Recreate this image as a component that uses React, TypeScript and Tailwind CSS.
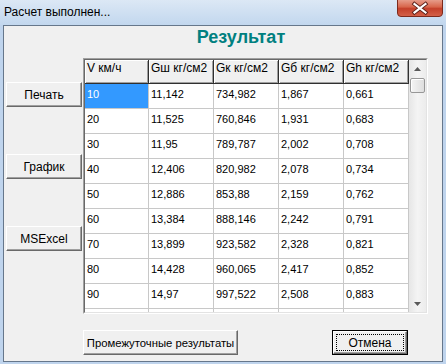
import type { ReactNode } from 'react';

const headers = ['V км/ч', 'Gш кг/см2', 'Gк кг/см2', 'Gб кг/см2', 'Gh кг/см2'];
const colW = ['w-[64px]', 'w-[65px]', 'w-[65px]', 'w-[65px]', 'w-[65px]'];

const rows = [
  ['10', '11,142', '734,982', '1,867', '0,661'],
  ['20', '11,525', '760,846', '1,931', '0,683'],
  ['30', '11,95', '789,787', '2,002', '0,708'],
  ['40', '12,406', '820,982', '2,078', '0,734'],
  ['50', '12,886', '853,88', '2,159', '0,762'],
  ['60', '13,384', '888,146', '2,242', '0,791'],
  ['70', '13,899', '923,582', '2,328', '0,821'],
  ['80', '14,428', '960,065', '2,417', '0,852'],
  ['90', '14,97', '997,522', '2,508', '0,883'],
];

function Btn({ children, className = '' }: { children: ReactNode; className?: string }) {
  return (
    <div
      className={`flex items-center justify-center bg-[#f0f0f0] border border-t-white border-l-white border-r-[#696969] border-b-[#696969] shadow-[inset_-1px_-1px_0_#a0a0a0] leading-[14px] whitespace-nowrap ${className}`}
    >
      {children}
    </div>
  );
}

function CloseButton() {
  return (
    <svg width="46" height="17" viewBox="0 0 46 17" className="mr-[3px] shrink-0">
      <defs>
        <linearGradient id="cb" x1="0" y1="0" x2="0" y2="1">
          <stop offset="0" stopColor="#e8a493" />
          <stop offset="0.45" stopColor="#d8664c" />
          <stop offset="0.55" stopColor="#c4402a" />
          <stop offset="1" stopColor="#d4624a" />
        </linearGradient>
      </defs>
      <path d="M0.5 -1 V13 Q0.5 16.5 4 16.5 H42 Q45.5 16.5 45.5 13 V-1 Z" fill="url(#cb)" stroke="#7d2a1c" />
      <path d="M17.5 4 L28.5 12.5 M28.5 4 L17.5 12.5" stroke="#5a2018" strokeWidth="4" strokeLinecap="square" />
      <path d="M17.5 4 L28.5 12.5 M28.5 4 L17.5 12.5" stroke="#ffffff" strokeWidth="2.2" strokeLinecap="square" />
    </svg>
  );
}

function Arrow({ up }: { up?: boolean }) {
  return (
    <div className="h-[17px] flex items-center justify-center">
      <svg width="7" height="4" viewBox="0 0 7 4">
        <path d={up ? 'M3.5 0 L7 4 L0 4 Z' : 'M0 0 L7 0 L3.5 4 Z'} fill="#5a5a5a" />
      </svg>
    </div>
  );
}

export default function App() {
  return (
    <div className="w-[446px] h-[364px] bg-[#bfd4ed] flex flex-col font-['Liberation_Sans',Arial,sans-serif] text-black select-none overflow-hidden">
      <div className="h-[25px] shrink-0 flex items-start bg-gradient-to-b from-[#dce8f5] to-[#c2d7ee]">
        <span className="ml-[4px] mt-[5px] text-[12px] leading-[14px]">Расчет выполнен...</span>
        <div className="ml-auto">
          <CloseButton />
        </div>
      </div>

      <div className="mx-[3px] mb-[2px] flex-1 border border-[#66778b] bg-[#f0f0f0] flex flex-col">
        <div className="h-[32px] pt-[2px] pl-[36px] text-center text-[18px] font-bold leading-[18px] text-[#008080]">
          Результат
        </div>

        <div className="flex">
          <div className="ml-[2px] w-[76px] pt-[24px] flex flex-col gap-[47px] text-[12px]">
            <Btn className="h-[25px]">Печать</Btn>
            <Btn className="h-[25px]">График</Btn>
            <Btn className="h-[25px]">MSExcel</Btn>
          </div>

          <div className="ml-[1px] border border-t-[#a0a0a0] border-l-[#a0a0a0] border-r-white border-b-white">
            <div className="border border-t-[#696969] border-l-[#696969] border-r-[#e3e3e3] border-b-[#e3e3e3] flex h-[254px]">
              <div className="w-[324px] h-[252px] overflow-hidden bg-white text-[11px] leading-[13px]">
                <div className="flex h-[24px] bg-[#f0f0f0] text-[12px] leading-[14px]">
                  {headers.map((h, i) => (
                    <div
                      key={h}
                      className={`${colW[i]} h-[24px] pl-[2px] pt-[1px] border-r border-b border-[#303030] shadow-[inset_1px_1px_0_#fff,inset_-1px_-1px_0_#a0a0a0] whitespace-nowrap overflow-hidden`}
                    >
                      {h}
                    </div>
                  ))}
                </div>
                {[...rows, ['', '', '', '', '']].map((r, ri) => (
                  <div key={ri} className="flex h-[25px]">
                    {r.map((c, ci) => (
                      <div key={ci} className={`${colW[ci]} h-[25px] border-r border-b border-[#c8c8c8]`}>
                        <div
                          className={`h-[24px] pt-[4px] pl-[2px] ${
                            ri === 0 && ci === 0 ? 'bg-[#3399ff] text-white' : ''
                          }`}
                        >
                          {c}
                        </div>
                      </div>
                    ))}
                  </div>
                ))}
              </div>
              <div className="w-[17px] h-[252px] flex flex-col bg-gradient-to-r from-[#e6e6e6] via-[#f4f4f4] to-[#ececec]">
                <Arrow up />
                <div className="mx-[1px] mt-[1px] h-[15px] rounded-[2px] border border-[#979797] bg-gradient-to-r from-[#f5f5f5] to-[#dedede] shadow-[inset_1px_1px_0_#fff]" />
                <div className="flex-1" />
                <Arrow />
              </div>
            </div>
          </div>
        </div>

        <div className="flex mt-[16px]">
          <Btn className="ml-[79px] w-[155px] h-[25px] text-[11.3px]">Промежуточные результаты</Btn>
          <div className="ml-[94px] w-[76px] h-[25px] border border-black flex">
            <Btn className="flex-1 p-[2px] items-stretch text-[12px]">
              <span className="flex-1 flex items-center justify-center border border-dotted border-black">
                Отмена
              </span>
            </Btn>
          </div>
        </div>
      </div>
    </div>
  );
}
